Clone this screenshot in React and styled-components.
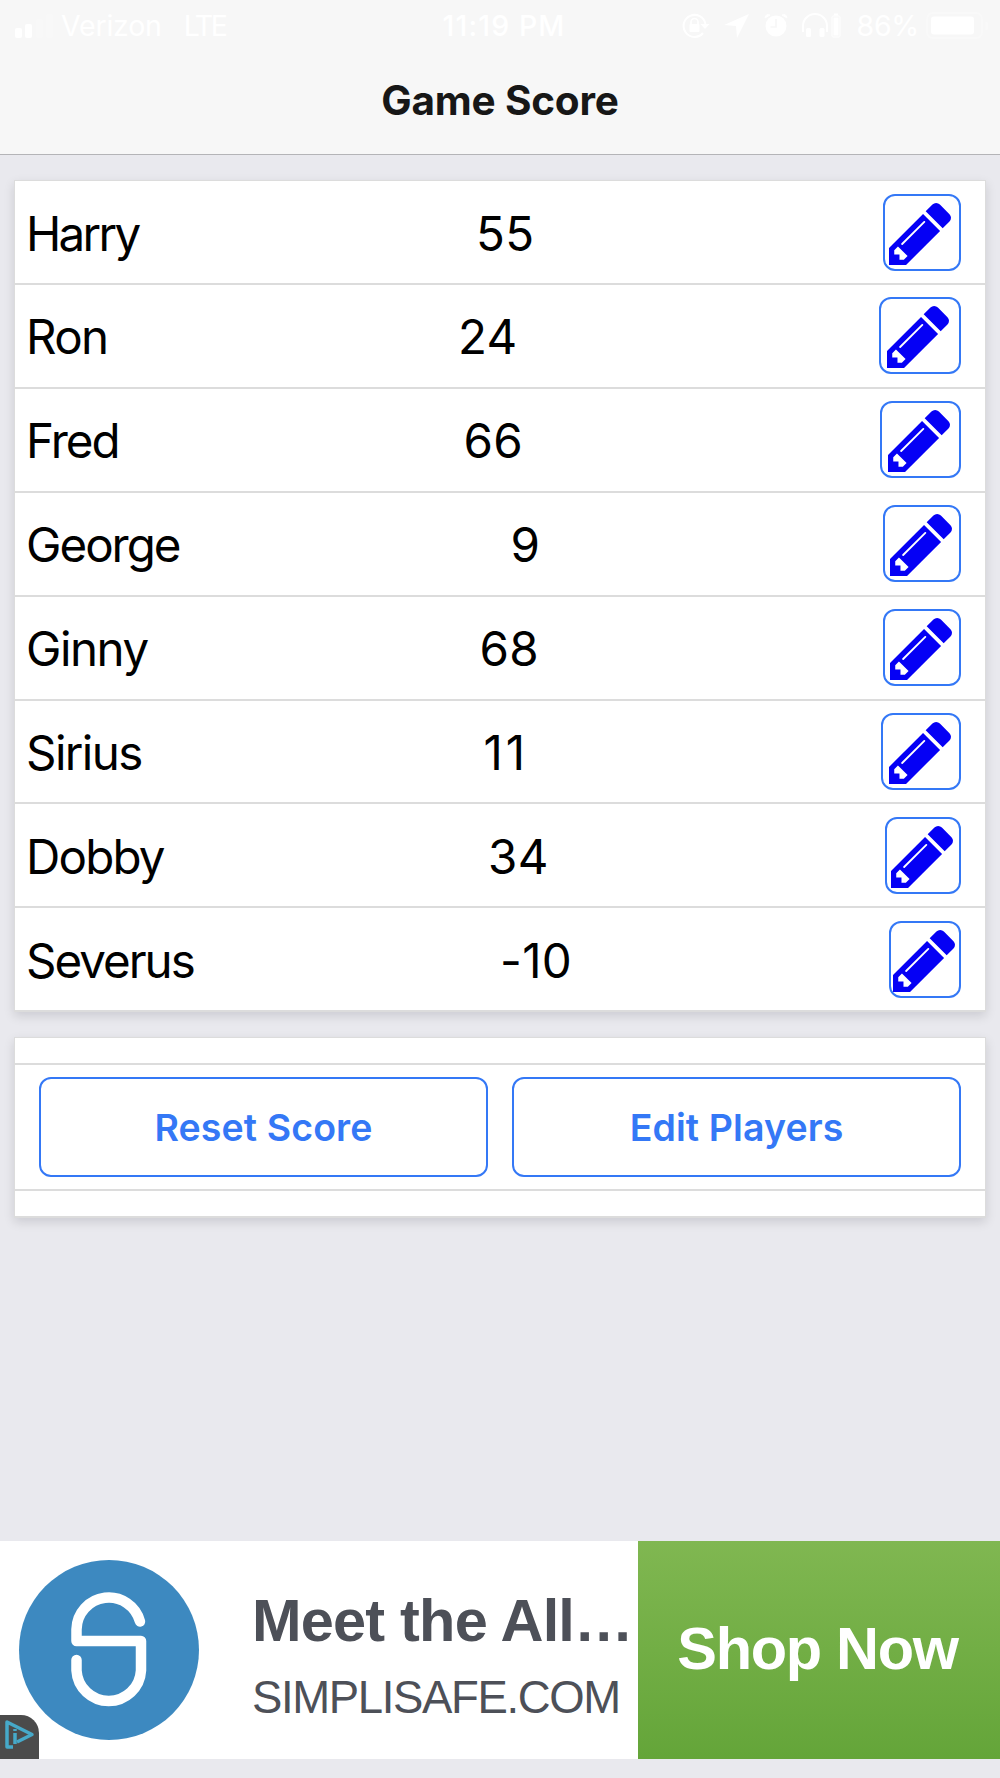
import React from 'react'
import styled, { createGlobalStyle } from 'styled-components'

const blue = '#3478f6';
const line = '#dcdcdc';

const players = [
  {name:"Harry",score:"55",left:476,btn:78.5,track:-2.7},
  {name:"Ron",score:"24",left:458,btn:82.5,track:-1.7},
  {name:"Fred",score:"66",left:463.5,btn:81,track:-2},
  {name:"George",score:"9",left:510.5,btn:78,track:-2},
  {name:"Ginny",score:"68",left:479.5,btn:78,track:-1.5},
  {name:"Sirius",score:"11",left:483.5,btn:80,track:-1.6,scoreTrack:3},
  {name:"Dobby",score:"34",left:488,btn:76,track:-1.8},
  {name:"Severus",score:"-10",left:500,btn:72,track:-2}
]

const GlobalStyle = createGlobalStyle`
  * {
    box-sizing: border-box;
  }
  body {
    margin: 0;
    background: #e9e9ee;
    font-family: Inter, "Liberation Sans", sans-serif;
  }
`

const Screen = styled.div`
  width: 1000px;
  height: 1778px;
  display: flex;
  flex-direction: column;
  overflow: hidden;
  background: #e9e9ee;
`

const Header = styled.header`
  height: 155px;
  flex: none;
  background: #f7f7f7;
  border-bottom: 1px solid #b4b4b7;
`

const StatusBar = styled.div`
  height: 52px;
  display: grid;
  grid-template-columns: 1fr auto 1fr;
  align-items: center;
  padding: 0 11px 0 14px;
  color: #fff;
  font-size: 28.5px;
  line-height: 52px;
`

const StatusLeft = styled.div`
  display: flex;
  align-items: center;
`

const Carrier = styled.span`
  margin-left: 7px;
  letter-spacing: -0.2px;
`

const Network = styled.span`
  margin-left: 22px;
  letter-spacing: -2.4px;
`

const Clock = styled.span`
  padding-left: 5px;
  font-weight: 500;
  letter-spacing: 1.1px;
`

const StatusRight = styled.div`
  display: flex;
  align-items: center;
  justify-content: flex-end;
`

const Percent = styled.span`
  margin: 0 7px 0 15px;
  letter-spacing: -0.3px;
`

const Title = styled.h1`
  margin: 0;
  height: 98px;
  text-align: center;
  font-size: 40.5px;
  font-weight: 700;
  line-height: 98px;
  letter-spacing: -0.2px;
  color: #171717;
`

const Card = styled.section`
  flex: none;
  margin: 25px 14px 0;
  background: #fff;
  border: 1px solid ${line};
  border-bottom-width: 2px;
  box-shadow: 0 4px 10px rgba(0, 0, 20, 0.13);
`

const Row = styled.div`
  height: 102px;
  display: flex;
  align-items: center;
  padding: 0 24px 0 11px;
  font-size: 47.5px;
  color: #000;

  & + & {
    height: 103.9px;
    border-top: 2px solid ${line};
  }
`

const Name = styled.span`
  width: ${props=>props.width}px;
  padding-top: 2px;
  letter-spacing: ${props=>props.track}px;
`

const Score = styled.span`
  flex: 1;
  padding-top: 2px;
  letter-spacing: ${props=>props.track}px;
`

const EditButton = styled.button`
  width: ${props=>props.width}px;
  height: 77px;
  display: flex;
  align-items: center;
  justify-content: center;
  padding: 3px 3px 0 0;
  background: #fff;
  border: 2px solid ${blue};
  border-radius: 12px;
`

const Spacer = styled.div`
  height: 25px;
`

const Actions = styled.div`
  height: 128px;
  display: grid;
  grid-template-columns: 1fr 1fr;
  gap: 24px;
  padding: 12px 24px;
  border-top: 2px solid ${line};
  border-bottom: 2px solid ${line};
`

const ActionButton = styled.button`
  padding: 0;
  background: #fff;
  border: 2px solid ${blue};
  border-radius: 12px;
  font-family: inherit;
  font-size: 37.5px;
  font-weight: 600;
  letter-spacing: 0.1px;
  color: ${blue};
`

const Ad = styled.footer`
  height: 218px;
  flex: none;
  display: flex;
  position: relative;
  margin: auto 0 19px;
  background: #fff;
  font-family: "Liberation Sans", Arial, sans-serif;
`

const AdLogo = styled.svg`
  flex: none;
  margin: 18px 0 0 18px;
`

const AdText = styled.div`
  flex: 1;
  padding: 45px 0 0 52px;
  white-space: nowrap;
  color: #4d5058;
`

const AdTitle = styled.div`
  font-size: 59.5px;
  font-weight: bold;
  line-height: 70px;
  letter-spacing: -0.8px;
`

const AdDomain = styled.div`
  margin-top: 15px;
  font-size: 45.5px;
  line-height: 54px;
  letter-spacing: -1.35px;
`

const ShopButton = styled.button`
  width: 362px;
  flex: none;
  padding: 0 3px 3px 0;
  border: 0;
  background: linear-gradient(#80b751, #64a539);
  font-family: inherit;
  font-size: 59.5px;
  font-weight: bold;
  letter-spacing: -1.3px;
  color: #fff;
`

const AdChoices = styled.div`
  position: absolute;
  left: 0;
  bottom: 0;
  width: 39px;
  height: 44px;
  padding: 5px 0 0 5px;
  background: #4b4b4b;
  border-top-right-radius: 18px;
`

const Signal = () => (
  <svg width="40" height="26" viewBox="0 0 40 26" fill="#fff">
    <rect x="1" y="15" width="7" height="10" rx="2"/>
    <rect x="11" y="11" width="7" height="14" rx="2"/>
    <rect x="22" y="6" width="7" height="19" rx="2" opacity="0.2"/>
    <rect x="32" y="1" width="7" height="24" rx="2" opacity="0.2"/>
  </svg>
)

// lock, location, alarm, headphones with their own battery
const StatusIcons = () => (
  <svg width="160" height="26" viewBox="0 0 160 26" fill="#fff">
    <path d="M21 20a11 11 0 1 1 2.4-9" fill="none" stroke="#fff" strokeWidth="2"/>
    <path d="M18.500 11h9l-4.500 5z"/>
    <rect x="7.500" y="11" width="10" height="8" rx="1"/>
    <path d="M9 12V9a3.500 3.500 0 0 1 7 0v3" fill="none" stroke="#fff" strokeWidth="1.600"/>
    <path d="M67 1L42 12l12 1 1 12z"/>
    <circle cx="94" cy="13" r="10.500"/>
    <path d="M94 6v8h-5.500" fill="none" stroke="#f7f7f7" strokeWidth="1.600"/>
    <path d="M83 5q1-5 5-3zM105 5q-1-5-5-3z" stroke="#fff"/>
    <path d="M121 19v-6a12 12 0 0 1 24 0v6" fill="none" stroke="#fff" strokeWidth="2"/>
    <rect x="124" y="15" width="5" height="9" rx="1.500"/>
    <rect x="137.500" y="15" width="5" height="9" rx="1.500"/>
    <rect x="150" y="3" width="8" height="21" rx="1" fill="none" stroke="#fff"/>
    <rect x="151.500" y="4.500" width="5" height="18"/>
    <rect x="152" y="0.500" width="4" height="2"/>
  </svg>
)

const Battery = () => (
  <svg width="63" height="28" viewBox="0 0 63 28" fill="#fff">
    <rect x="1" y="1" width="55" height="25" rx="6" fill="none" stroke="#fff" strokeWidth="2" opacity="0.25"/>
    <rect x="5" y="4.500" width="43" height="18" rx="3"/>
    <path d="M59.500 9q3 1 3 5t-3 5z" opacity="0.25"/>
  </svg>
)

const PencilIcon = styled.svg`
  flex: none;
  fill: #0500f5;
`

const Pencil = () => (
  <PencilIcon width="62" height="62" viewBox="128 149 1515 1515">
    <path d="M491 1536l91-91-235-235-91 91v107h128v128h107zm523-928q0-22-22-22-10 0-17 7l-542 542q-7 7-7 17 0 22 22 22 10 0 17-7l542-542q7-7 7-17zm-54-192l416 416-832 832h-416v-416zm683 96q0 53-37 90l-166 166-416-416 166-165q36-38 90-38 53 0 91 38l235 234q37 39 37 91z"/>
  </PencilIcon>
)

const App = () => {

  const rows = players.map(p => (
    <Row key={p.name}>
      <Name width={p.left-26} track={p.track}>{p.name}</Name>
      <Score track={p.scoreTrack || 0.3}>{p.score}</Score>
      <EditButton width={p.btn} aria-label={"Edit "+p.name}><Pencil/></EditButton>
    </Row>
  ));

  return <Screen>
    <GlobalStyle/>
    <Header>
      <StatusBar>
        <StatusLeft>
          <Signal/>
          <Carrier>Verizon</Carrier>
          <Network>LTE</Network>
        </StatusLeft>
        <Clock>11:19 PM</Clock>
        <StatusRight>
          <StatusIcons/>
          <Percent>86%</Percent>
          <Battery/>
        </StatusRight>
      </StatusBar>
      <Title>Game Score</Title>
    </Header>
    <Card>{rows}</Card>
    <Card>
      <Spacer/>
      <Actions>
        <ActionButton>Reset Score</ActionButton>
        <ActionButton>Edit Players</ActionButton>
      </Actions>
      <Spacer/>
    </Card>
    <Ad>
      <AdLogo width="182" height="182" viewBox="0 0 182 182">
        <circle cx="91" cy="91" r="90" fill="#3d89c0"/>
        <path
          d="M122 62.500A32.300 32.300 0 0 0 58.500 70.300V82H123V111.500A32.300 32.300 0 0 1 58.500 111.500V101"
          fill="none" stroke="#fff" strokeWidth="10.500" strokeLinecap="round" strokeLinejoin="round"
        />
      </AdLogo>
      <AdText>
        <AdTitle>Meet the All…</AdTitle>
        <AdDomain>SIMPLISAFE.COM</AdDomain>
      </AdText>
      <ShopButton>Shop Now</ShopButton>
      <AdChoices>
        <svg width="30" height="30" viewBox="0 0 30 30" fill="none" stroke="#46a9c9" strokeWidth="3.500">
          <path d="M8 27H2V2L27 14.500L12 22" strokeLinejoin="round"/>
          <path d="M10 13v11M10 9v2"/>
        </svg>
      </AdChoices>
    </Ad>
  </Screen>
};

export default App;
